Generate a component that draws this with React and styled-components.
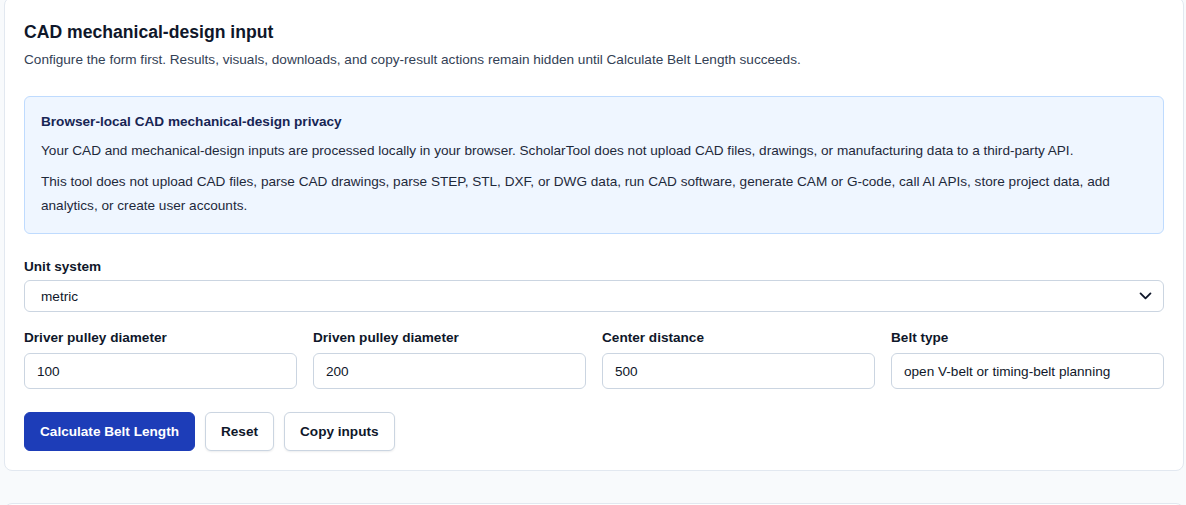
import React, { useState } from "react"
import styled, { createGlobalStyle } from "styled-components"

const GlobalStyle = createGlobalStyle`
    * { box-sizing: border-box; }
    body {
        margin: 0;
        background: #f8fafc;
        font-family: "Liberation Sans", Arial, sans-serif;
        color: #0f172a;
    }
`

const Page = styled.div`
    display: flex;
    flex-direction: column;
    gap: 32px;
    padding: 0 2px 0 4px;
    margin-top: -3px;
`

const Card = styled.section`
    width: 1180px;
    background: #ffffff;
    border: 1px solid #e2e8f0;
    border-radius: 8px;
    padding: ${({ padding }) => padding ? padding : "22px 19px 19px"};
    min-height: ${({ minHeight }) => minHeight ? minHeight : "auto"};
`

const Title = styled.h2`
    margin: 0;
    font-size: 17.6px;
    line-height: 24px;
    font-weight: 700;
    color: #0f172a;
`

const Subtitle = styled.p`
    margin: 6px 0 0;
    font-size: 13.6px;
    line-height: 20px;
    color: #334155;
`

const Notice = styled.div`
    margin-top: 26px;
    background: #eff6ff;
    border: 1px solid #bfdbfe;
    border-radius: 6px;
    padding: 16px 16px 15px;
`

const NoticeTitle = styled.h3`
    margin: 0;
    font-size: 13.6px;
    line-height: 17px;
    font-weight: 700;
    color: #172554;
`

const NoticeText = styled.p`
    margin: ${({ first }) => first ? "9px 0 0" : "7px 0 0"};
    font-size: 13.6px;
    line-height: 24px;
    color: #1e293b;
`

const Form = styled.form`
    margin-top: 25px;
    display: flex;
    flex-direction: column;
`

const Field = styled.label`
    display: flex;
    flex-direction: column;
    gap: ${({ gap }) => gap ? gap : "7px"};
    min-width: 0;
`

const Label = styled.span`
    font-size: 13.6px;
    line-height: 16px;
    font-weight: 700;
    color: #0f172a;
`

const SelectWrap = styled.div`
    position: relative;
    height: 32px;
`

const Select = styled.select`
    appearance: none;
    width: 100%;
    height: 100%;
    border: 1px solid #cbd5e1;
    border-radius: 6px;
    background: #ffffff;
    padding: 0 40px 0 16px;
    font-family: inherit;
    font-size: 13.6px;
    color: #0f172a;
    outline: none;
`

const Chevron = styled.svg`
    position: absolute;
    right: 10px;
    top: 7px;
    pointer-events: none;
`

const Grid = styled.div`
    margin-top: 18px;
    display: grid;
    grid-template-columns: repeat(4, 1fr);
    gap: 16px;
`

const Input = styled.input`
    width: 100%;
    height: 36px;
    border: 1px solid #cbd5e1;
    border-radius: 6px;
    background: #ffffff;
    padding: 0 12px;
    font-family: inherit;
    font-size: 13.6px;
    color: #0f172a;
    outline: none;
`

const Actions = styled.div`
    margin-top: 23px;
    display: flex;
    gap: 10px;
`

const Button = styled.button`
    height: 39px;
    padding: 0 15px;
    border-radius: 6px;
    font-family: inherit;
    font-size: 13.6px;
    font-weight: 700;
    cursor: pointer;
    border: 1px solid ${({ primary }) => primary ? "#1d3db8" : "#cbd5e1"};
    background: ${({ primary }) => primary ? "#1d3db8" : "#ffffff"};
    color: ${({ primary }) => primary ? "#ffffff" : "#0f172a"};
    box-shadow: ${({ primary }) => primary ? "none" : "0 1px 2px rgba(15, 23, 42, 0.08)"};
`

const fields = [
    { key: "driver", label: "Driver pulley diameter", value: "100" },
    { key: "driven", label: "Driven pulley diameter", value: "200" },
    { key: "center", label: "Center distance", value: "500" },
    { key: "belt", label: "Belt type", value: "open V-belt or timing-belt planning" },
]

const App = () => {

    const [ unit, setUnit ] = useState( "metric" )
    const [ values, setValues ] = useState(
        fields.reduce(( acc, f ) => ({ ...acc, [ f.key ]: f.value }), {})
    )

    return (
        <>
            <GlobalStyle />
            <Page>
                <Card>
                    <Title>CAD mechanical-design input</Title>
                    <Subtitle>
                        Configure the form first. Results, visuals, downloads, and copy-result actions remain hidden until Calculate Belt Length succeeds.
                    </Subtitle>
                    <Notice>
                        <NoticeTitle>Browser-local CAD mechanical-design privacy</NoticeTitle>
                        <NoticeText first>
                            Your CAD and mechanical-design inputs are processed locally in your browser. ScholarTool does not upload CAD files, drawings, or manufacturing data to a third-party API.
                        </NoticeText>
                        <NoticeText>
                            This tool does not upload CAD files, parse CAD drawings, parse STEP, STL, DXF, or DWG data, run CAD software, generate CAM or G-code, call AI APIs, store project data, add analytics, or create user accounts.
                        </NoticeText>
                    </Notice>
                    <Form onSubmit={ e => e.preventDefault() }>
                        <Field gap="5px">
                            <Label>Unit system</Label>
                            <SelectWrap>
                                <Select value={ unit } onChange={ e => setUnit( e.target.value ) }>
                                    <option value="metric">metric</option>
                                    <option value="imperial">imperial</option>
                                </Select>
                                <Chevron width="17" height="17" viewBox="0 0 24 24" fill="none" stroke="#0f172a" strokeWidth="2.6" strokeLinecap="round" strokeLinejoin="round">
                                    <path d="M5 9l7 7 7-7" />
                                </Chevron>
                            </SelectWrap>
                        </Field>
                        <Grid>
                            {
                                fields.map( f => (
                                    <Field key={ f.key }>
                                        <Label>{ f.label }</Label>
                                        <Input
                                            value={ values[ f.key ] }
                                            onChange={ e => setValues({ ...values, [ f.key ]: e.target.value }) }
                                        />
                                    </Field>
                                ))
                            }
                        </Grid>
                        <Actions>
                            <Button primary type="submit">Calculate Belt Length</Button>
                            <Button type="button">Reset</Button>
                            <Button type="button">Copy inputs</Button>
                        </Actions>
                    </Form>
                </Card>
                <Card padding="0" minHeight="40px" />
            </Page>
        </>
    )
}

export default App
